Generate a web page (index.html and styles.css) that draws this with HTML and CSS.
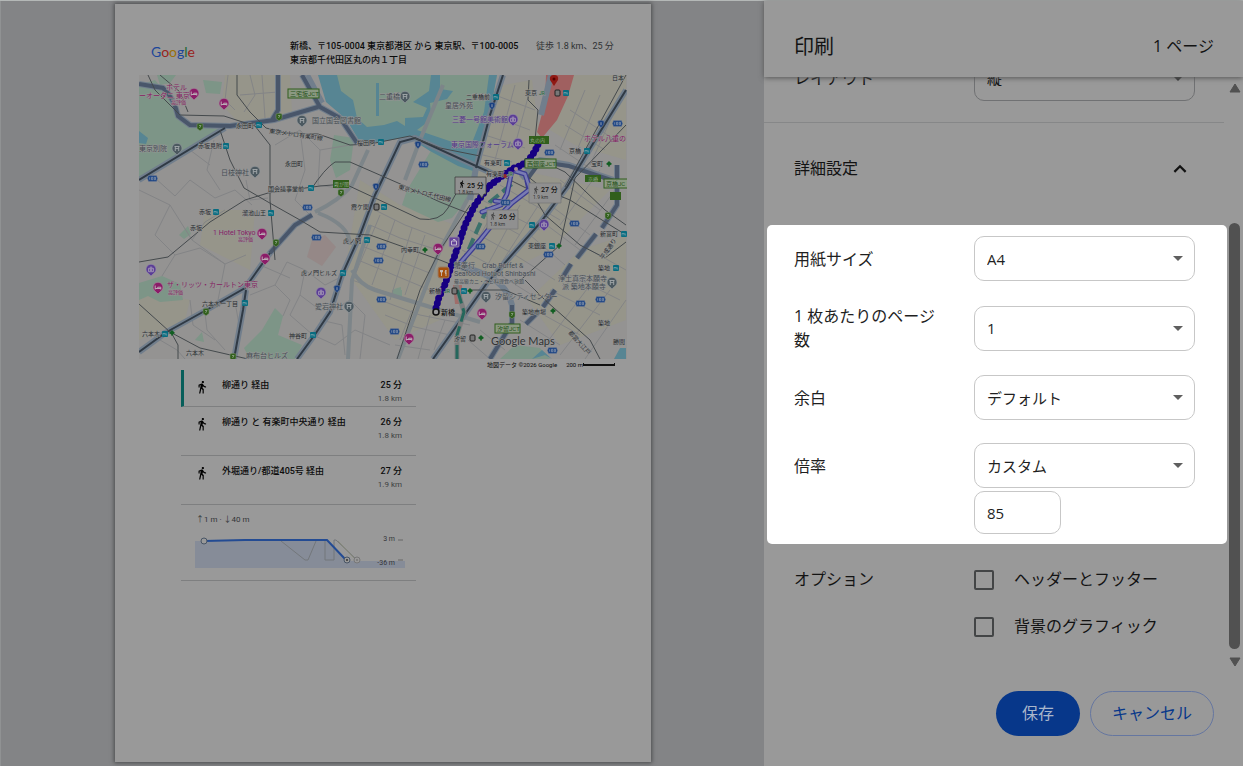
FILE: index.html
```html
<!DOCTYPE html>
<html lang="ja">
<head>
<meta charset="utf-8">
<meta name="viewport" content="width=device-width, initial-scale=1">
<title>印刷</title>
<link rel="stylesheet" href="styles.css">
</head>
<body>
<div class="dialog">
  <main class="preview">
    <article class="paper">
      <header class="paper-head">
        <div class="logo" aria-label="Google"><span class="g-blue">G</span><span class="g-red">o</span><span class="g-yellow">o</span><span class="g-blue">g</span><span class="g-green">l</span><span class="g-red">e</span></div>
        <h2 class="trip">新橋、〒105-0004 東京都港区 から 東京駅、〒100-0005<br>東京都千代田区丸の内１丁目</h2>
        <p class="trip-sum">徒歩 1.8 km、25 分</p>
      </header>

      <svg class="map" viewBox="139 75 488 284" role="img" aria-label="新橋から東京駅までの地図">
        <defs>
          <symbol id="metro" viewBox="0 0 6 6"><rect width="6" height="6" rx="1" fill="#086c80"/><path d="M1 4.500V2l1 1 1-1v2.500M4 2v2h1.200" fill="none" stroke="#87a9b0" stroke-width=".6"/></symbol>
          <symbol id="hotel" viewBox="0 0 12 12"><path d="M6 12L3.500 9.600A5 5 0 1 1 8.500 9.600Z" fill="#8b1c68" stroke="#a1889a" stroke-width=".7"/><path d="M3.200 3.500V7.500M3.200 6.500H8.800M8.800 7.500V5.200H5.700V6.500" fill="none" stroke="#bbabb5"/></symbol>
          <symbol id="poi" viewBox="0 0 12 12"><path d="M6 12L3.500 9.600A5 5 0 1 1 8.500 9.600Z" fill="#4c5960" stroke="#90979b" stroke-width=".7"/><path d="M3.500 3.500h5M4.300 3.500v4.500M7.700 3.500v4.500M4.300 5.600h3.400" fill="none" stroke="#a4a9ac" stroke-width=".9"/></symbol>
          <symbol id="art" viewBox="0 0 12 12"><path d="M6 12L3.500 9.600A5 5 0 1 1 8.500 9.600Z" fill="#5a3c96" stroke="#948ba6" stroke-width=".7"/><path d="M3.600 4.300h4.800v3.400H3.600zM4.800 3.200h2.400M5.200 5.200h1.600v1.400H5.200z" fill="none" stroke="#aea6ba" stroke-width=".8"/></symbol>
          <symbol id="shield" viewBox="0 0 8 8"><path d="M1 1Q4-.5 7 1Q8 5 4 7.800Q0 5 1 1Z" fill="#183f80" stroke="#7e8795" stroke-width=".5"/><path d="M4 2.200v3" stroke="#a3aab5" stroke-width=".9"/></symbol>
          <symbol id="pref" viewBox="0 0 11 7"><path d="M1.500.5h8L10.600 3.500 9.500 6.500h-8L.4 3.500Z" fill="#204785" stroke="#7e8795" stroke-width=".4"/><path d="M2.700 2.300v2.400M4.500 2.300h1.300v2.400H4.500zM7.300 2.300h1.200v2.400H7.300z" fill="none" stroke="#9ca6b5" stroke-width=".6"/></symbol>
          <symbol id="exit" viewBox="0 0 8 8"><path d="M1 1Q4-.5 7 1V5.500L4 7.800 1 5.500Z" fill="#315f1c" stroke="#80907a" stroke-width=".5"/><path d="M3 2.500h2L3.500 5" fill="none" stroke="#91a48a" stroke-width=".8"/></symbol>
          <symbol id="tree" viewBox="0 0 6 6"><path d="M3 0L6 3 3 5 0 3Z" fill="#125e22"/><path d="M3 3v3" stroke="#125e22"/></symbol>
          <symbol id="walk" viewBox="0 0 24 24"><path d="M13.500 5.500c1.100 0 2-.9 2-2s-.9-2-2-2-2 .9-2 2 .9 2 2 2zM9.800 8.900L7 23h2.100l1.800-8 2.100 2v6h2v-7.500l-2.100-2 .6-3C14.800 12 16.800 13 19 13v-2c-1.900 0-3.500-1-4.300-2.400l-1-1.600c-.4-.6-1-1-1.700-1-.3 0-.5.1-.8.1L6 8.300V13h2V9.600l1.800-.7"/></symbol>
        </defs>
        <rect x="139" y="75" width="488" height="284" fill="#949392"/>

        <g fill="#96958a">
          <path d="M225 75L290 75 292 112 240 124 222 105ZM488 88L532 80 541 145 505 175 475 180 482 130ZM565 75L626 75V160L575 145 550 130ZM470 205L520 170 610 190 550 250 480 285 455 280ZM360 180L400 205 455 225 440 320 395 340 345 270ZM205 210L255 210 250 270 200 245ZM139 290L190 300 185 320 139 340ZM528 300L580 250 626 235V320L560 345Z"/>
        </g>
        <g fill="#7d9587">
          <path d="M139 85L155 80 172 100 180 121 222 130 139 178ZM157 75H176L170 83 160 85ZM203 80L222 82 220 94 206 93Z"/>
          <path d="M332 75H497L476 165 420 140 395 134 366 138 340 112Z"/>
          <path d="M432 149L476 170 480 184 452 218 438 222 402 205 407 190Z"/>
          <path d="M334 135L354 138 350 170 336 178 330 160ZM244 348L262 330 275 308 283 316 278 335 302 345 295 359H250ZM139 283L162 276 180 284 183 300 160 302 148 296 139 300ZM179 235L188 226 191 234 184 239ZM195 340L202 332 204 342ZM394 289L401 287V297L391 295Z"/>
          <path d="M500 359L515 345 540 348 550 359ZM392 290H402V297H392Z"/>
        </g>
        <g fill="#578593">
          <path d="M318 75H337L341 91 353 100 357 118 367 127 384 125 397 121 405 126 405 118 423 117 427 108 413 102 429 91 431 75H440V89L453 91 447 99 430 103 431 115 425 124 417 130 470 148 484 112 489 75H497L490 113 476 172 458 166 430 151 408 137 380 142 360 142 346 119 326 102Z"/>
          <path d="M376 83H379V116H376ZM139 131L148 138 146 144 139 143ZM620 348H626V359H614Z"/>
          <path d="M532 359L542 350 552 359 545 355Z"/>
        </g>
        <path d="M546 75H574L568 96 557 120 542 138 537 132 545 103Z" fill="#a06060"/>
        <path d="M312 240L325 235 336 247 322 266 307 257Z" fill="#958887"/>
        <path d="M453 285H462V304H455Z" fill="#a06d6a"/>

        <g fill="none" stroke="#838486" stroke-width="1">
          <path d="M139 190L170 205 192 240 225 264 218 300M155 178L175 196 190 180 215 198 235 190 252 205M170 205L155 235 175 255 162 276M192 240L205 222 225 210M175 255L200 248 225 264 246 255M190 300L193 325 215 340M218 300L235 302 240 330M204 305L207 330 225 350M165 333L190 318M250 295L275 285 290 300 283 316M275 285L287 262 305 270 300 295 320 310M260 265L290 278M305 270L325 285 345 275M300 295L290 315 313 335M313 335L335 345 355 330 390 345M330 312L350 300 365 315 360 359M350 300L352 280M320 320L342 325 345 355M246 180L250 200 268 198M160 340L177 350 185 359M214 140L207 170 220 190M190 150L210 165"/>
          <path d="M275 145L300 130 320 150 350 145M300 130L305 170 295 200 310 215M320 150L318 185 350 190M250 75L255 95 244 112M228 75L225 100 235 110M262 75L265 118M240 95L278 92M375 210L405 225 445 240M370 225L400 238 438 250M362 246L432 274M358 260L430 290M352 280L425 306M380 215L355 275M395 220L372 285M412 228L390 300M425 235L405 295M380 300L420 315 470 325M385 315L415 327 450 335M395 345L430 350M412 310L400 340M430 315L418 359M445 320L434 350"/>
          <path d="M495 95L535 110M490 115L530 130M485 135L525 148M483 155L512 162M515 85L495 160M530 90L515 145M475 210L520 235M482 200L540 230M500 185L560 220M470 230L510 252M462 250L500 270M500 200L472 250M520 205L485 270M545 195L500 265M560 180L600 210M550 205L590 235M540 220L580 250M530 235L565 265M515 255L555 280M500 275L540 300M580 160L548 210M600 170L560 225M615 190L575 245M570 110L615 140M565 125L605 150M555 145L600 175M585 90L560 150M600 95L575 155M615 110L590 165M520 320L560 345M535 310L580 335M550 290L600 315M570 275L620 300M590 250L626 270M545 345L590 285M560 355L610 290M585 359L626 300M480 330L505 350M468 340L490 359"/>
        </g>
        <g fill="none" stroke="#7d8589" stroke-width="4">
          <path d="M315 212Q340 200 352 185L368 150M370 225L352 280 348 359M318 213Q350 225 350 245M352 270Q360 285 375 290L440 310 480 322M443 85L420 140 405 180M478 180L440 250 398 359"/>
        </g>

        <g fill="none" stroke="#717e8c" stroke-width="6" stroke-linejoin="round">
          <path d="M139 84L163 88Q174 98 178 116L190 125 230 126 274 120 318 107M302 75L320 107 340 118 357 143M307 75L322 103M278 75V110L272 120M225 128L139 180M139 352L165 333 210 308 245 288 270 253 295 225 312 215M234 359L243 310 246 290M297 359L316 333 330 312 342 275 360 235 375 195 400 142 415 138 500 177M433 359L463 317 487 283 540 223 567 187 600 132 626 90"/>
          <path d="M503 75L490 115 476 168 470 200M460 267Q505 275 512 305V323L490 359"/>
          <path d="M521 178L540 160 569 165 626 184M617 165V205L602 228M596 234L577 258M571 264L561 280M555 290L543 307M538 312L526 324M551 75L541 115"/>
        </g>
        <g fill="none" stroke="#49566a" stroke-width="4">
          <path d="M139 84L163 88Q174 98 178 116L190 125 230 126 274 120 318 107M302 75L320 107 340 118 357 143M278 75V110L272 120M270 253L295 225 312 215M512 305V323L490 359M526 181L540 162 569 166 626 185M617 165V205L602 228M596 234L577 258M571 264L561 280M555 290L543 307M538 312L526 324"/>
        </g>
        <g fill="none" stroke="#303a45" stroke-width="2">
          <path d="M225 128L139 180M139 352L165 333 210 308 245 288 270 253M234 359L243 310 246 290M297 359L316 333 330 312 342 275 360 235 375 195 400 142 415 138 500 177M433 359L463 317 487 283 540 223 567 187 600 132 626 90M503 75L490 115 476 168"/>
        </g>
        <g fill="none" stroke="#454a4d" stroke-width="1">
          <path d="M148 75L155 90 180 115 224 116 255 126 270 145V200L275 260M160 75L180 92 188 112M237 75V95L250 112 266 128 285 133 318 134 350 145 370 144 410 136 440 148 480 156M220 130L230 160 244 188 268 202 300 220 320 232 370 235 440 260 470 272M139 262L168 257 210 222 245 200 268 193 320 186M310 191Q325 168 335 162H350L405 186 440 202 470 214M320 186L345 184 375 198 420 219Q440 222 448 208L458 190M139 304L170 332 200 348 248 359M172 334L178 345V359M397 359L420 290 440 250 470 205M529 80L528 100 538 110 535 140M500 175L530 190 545 215 580 245 605 258 626 242M540 160L565 172 605 210 626 225M513 165L545 190 570 200 626 235M525 280L545 300 590 340 600 359M470 290L505 290 540 305M626 75L565 187M626 125L575 178 560 245 515 285"/>
        </g>
        <path d="M457 359V335L464 312 456 285" fill="none" stroke="#7e7e7e" stroke-width="5"/>
        <path d="M457 359V335L464 312 456 285" fill="none" stroke="#25675c" stroke-width="3" stroke-dasharray="14 5"/>
        <path d="M462 265L475 235 490 202 512 184" fill="none" stroke="#3c716b" stroke-width="4" stroke-dasharray="12 5"/>

        <g fill="none" stroke-linejoin="round" stroke-linecap="round">
          <path d="M460 263L480 240 500 215 512 203 530 189 525 174 512 170 507 194 501 205 482 212M512 203L495 201M460 263L474 247M529 190L527 181" stroke="#3c3c91" stroke-width="5"/>
          <path d="M460 263L480 240 500 215 512 203 530 189 525 174 512 170 507 194 501 205 482 212M512 203L495 201M460 263L474 247" stroke="#797bb3" stroke-width="2.500"/>
          <path d="M436 308L439 297 444 287 452 264 458 246 465 225 475 205 488 187 502 176 514 168 520 166 528 161 535 151 539 142" stroke="#140678" stroke-width="5"/>
          <path d="M436 308L439 297 444 287 452 264 458 246 465 225 475 205 488 187 502 176 514 168 520 166 528 161 535 151 539 142" stroke="#170082" stroke-width="7" stroke-dasharray="0 5"/>
        </g>
        <circle cx="505" cy="176" r="2" fill="#962929"/><circle cx="516" cy="169" r="2" fill="#a28c91"/>
        <circle cx="436" cy="312" r="3" fill="#999" stroke="#111" stroke-width="1.500"/>
        <path d="M554 86L550 80Q549 75 554 75T558 80Z" fill="#901914"/><circle cx="554" cy="79" r="1.500" fill="#500"/>

        <g>
          <use href="#metro" x="256" y="122" width="6" height="6"/><use href="#metro" x="223" y="143" width="6" height="6"/><use href="#metro" x="308" y="185" width="6" height="6"/><use href="#metro" x="378" y="139" width="6" height="6"/><use href="#metro" x="213" y="209" width="6" height="6"/><use href="#metro" x="268" y="210" width="6" height="6"/><use href="#metro" x="381" y="204" width="6" height="6"/><use href="#metro" x="364" y="237" width="6" height="6"/><use href="#metro" x="340" y="270" width="6" height="6"/><use href="#metro" x="242" y="300" width="6" height="6"/><use href="#metro" x="162" y="331" width="6" height="6"/><use href="#metro" x="310" y="332" width="6" height="6"/><use href="#metro" x="493" y="94" width="6" height="6"/><use href="#metro" x="563" y="90" width="6" height="6"/><use href="#metro" x="504" y="160" width="6" height="6"/><use href="#metro" x="584" y="148" width="6" height="6"/><use href="#metro" x="529" y="222" width="6" height="6"/><use href="#metro" x="549" y="243" width="6" height="6"/><use href="#metro" x="613" y="265" width="6" height="6"/><use href="#metro" x="621" y="231" width="6" height="6"/><use href="#metro" x="461" y="288" width="6" height="6"/>
          <use href="#hotel" x="188" y="88" width="12" height="12"/><use href="#hotel" x="218" y="98" width="12" height="12"/><use href="#hotel" x="256" y="228" width="12" height="12"/><use href="#hotel" x="259" y="253" width="12" height="12"/><use href="#hotel" x="152" y="282" width="12" height="12"/><use href="#hotel" x="432" y="243" width="12" height="12"/><use href="#hotel" x="476" y="308" width="12" height="12"/><use href="#hotel" x="403" y="333" width="12" height="12"/>
          <use href="#poi" x="171" y="143" width="12" height="12"/><use href="#poi" x="249" y="166" width="12" height="12"/><use href="#poi" x="296" y="115" width="12" height="12"/><use href="#poi" x="399" y="91" width="12" height="12"/><use href="#poi" x="343" y="301" width="12" height="12"/><use href="#poi" x="480" y="291" width="12" height="12"/><use href="#poi" x="606" y="277" width="12" height="12"/>
          <use href="#art" x="145" y="264" width="12" height="12"/><use href="#art" x="315" y="287" width="12" height="12"/><use href="#art" x="507" y="114" width="12" height="12"/><use href="#art" x="512" y="138" width="12" height="12"/><use href="#art" x="538" y="219" width="12" height="12"/>
          <use href="#shield" x="372" y="183" width="8" height="8"/><use href="#shield" x="414" y="141" width="8" height="8"/><use href="#shield" x="333" y="285" width="8" height="8"/><use href="#shield" x="488" y="102" width="8" height="8"/><use href="#shield" x="597" y="120" width="8" height="8"/>
          <use href="#pref" x="147" y="175" width="11" height="7"/><use href="#pref" x="302" y="204" width="11" height="7"/><use href="#pref" x="311" y="234" width="11" height="7"/><use href="#pref" x="376" y="243" width="11" height="7"/><use href="#pref" x="373" y="257" width="11" height="7"/><use href="#pref" x="376" y="296" width="11" height="7"/><use href="#pref" x="389" y="328" width="11" height="7"/><use href="#pref" x="418" y="161" width="11" height="7"/><use href="#pref" x="544" y="149" width="11" height="7"/><use href="#pref" x="612" y="120" width="11" height="7"/><use href="#pref" x="500" y="199" width="11" height="7"/><use href="#pref" x="475" y="243" width="11" height="7"/><use href="#pref" x="569" y="220" width="11" height="7"/><use href="#pref" x="543" y="251" width="11" height="7"/><use href="#pref" x="595" y="296" width="11" height="7"/><use href="#pref" x="575" y="300" width="11" height="7"/><use href="#pref" x="547" y="347" width="11" height="7"/>
          <use href="#exit" x="196" y="123" width="8" height="8"/><use href="#exit" x="275" y="113" width="8" height="8"/><use href="#exit" x="272" y="239" width="8" height="8"/><use href="#exit" x="202" y="308" width="8" height="8"/><use href="#exit" x="337" y="189" width="8" height="8"/><use href="#exit" x="229" y="353" width="8" height="8"/><use href="#exit" x="508" y="311" width="8" height="8"/><use href="#exit" x="604" y="212" width="8" height="8"/>
          <use href="#tree" x="169" y="330" width="6" height="6"/><use href="#tree" x="422" y="247" width="6" height="6"/><use href="#tree" x="467" y="288" width="6" height="6"/><use href="#tree" x="556" y="243" width="6" height="6"/><use href="#tree" x="550" y="308" width="6" height="6"/><use href="#tree" x="478" y="335" width="6" height="6"/><use href="#tree" x="606" y="161" width="6" height="6"/>
        </g>
        <g fill="#777" stroke="#222" stroke-width="1"><rect x="555" y="90" width="5" height="6" rx="1"/><rect x="374" y="204" width="5" height="6" rx="1"/><rect x="452" y="288" width="5" height="6" rx="1"/><rect x="470" y="335" width="5" height="6" rx="1"/></g>
        <rect x="438" y="267" width="11" height="11" rx="2" fill="#a6500d" stroke="#987b66"/><path d="M441.500 270v6M440.500 270v2h2v-2M446 276v-6q-2 2 0 4" fill="none" stroke="#ccc" stroke-width=".8"/>
        <rect x="449" y="237" width="10" height="10" rx="1" fill="#65449a" stroke="#92849f"/><path d="M451.500 241h5v4h-5zM453 239.500h2v1.500" fill="none" stroke="#c3bace"/>
        <g fill="#315f1c"><rect x="333" y="180" width="16" height="8"/><rect x="529" y="136" width="20" height="8"/><rect x="585" y="175" width="16" height="7"/><rect x="610" y="192" width="11" height="8"/></g>
        <g fill="#8b9982" stroke="#315f1c"><rect x="288" y="89" width="31" height="9"/><rect x="525" y="159" width="31" height="9"/><rect x="604" y="179" width="30" height="9"/><rect x="495" y="324" width="25" height="9"/></g>

        <g class="map-label exit-label"><text x="290" y="96">三宅坂JCT</text><text x="527" y="166">西銀座JCT</text><text x="606" y="186">京橋JC</text><text x="497" y="331">汐留JCT</text></g>
        <g class="map-label sign"><text x="334" y="186">霞が関</text><text x="530" y="142">丸の内</text><text x="588" y="181">京橋</text></g>
        <g class="map-label">
          <text x="236" y="128">永田町</text><text x="198" y="148">赤坂見附</text><text x="285" y="166">永田町</text><text x="268" y="191">国会議事堂前</text><text x="357" y="145">桜田門</text><text x="199" y="214">赤坂</text><text x="190" y="230">赤坂</text><text x="242" y="215">溜池山王</text><text x="351" y="209">霞ケ関</text><text x="343" y="243">虎ノ門</text><text x="301" y="275">虎ノ門ヒルズ</text><text x="202" y="306">六本木一丁目</text><text x="142" y="336">六本木</text><text x="186" y="355">六本木</text><text x="289" y="338">神谷町</text><text x="466" y="99">二重橋前</text><text x="525" y="95">東京</text><text x="484" y="165">有楽町</text><text x="486" y="176">有楽町</text><text x="569" y="153">京橋</text><text x="591" y="166">宝町</text><text x="612" y="80">日本</text><text x="401" y="252">内幸町</text><text x="429" y="293">新橋</text><text x="528" y="248">東銀座</text><text x="600" y="236">新富町</text><text x="598" y="270">築地</text><text x="522" y="314">築地市場</text><text x="598" y="325">築地</text><text x="454" y="341">汐留</text><text x="613" y="344">勝閧</text>
          <text x="398" y="189" transform="rotate(14 398 189)">東京メトロ千代田線</text><text x="269" y="133" transform="rotate(8 269 133)">東京メトロ有楽町線</text><text x="603" y="260" transform="rotate(-55 603 260)">平成通り</text><text x="568" y="333" transform="rotate(48 568 333)">都営大江戸</text>
        </g>
        <g class="map-label jr"><text x="539" y="95">JR</text><text x="507" y="176">JR</text><text x="444" y="293">JR</text></g>
        <text x="441" y="315" class="map-label start">新橋</text>
        <g class="map-label gray"><text x="139" y="151">東京別院</text><text x="221" y="175">日枝神社</text><text x="312" y="123">国立国会図書館</text><text x="379" y="99">二重橋</text><text x="315" y="309">愛宕神社</text><text x="445" y="108">皇居外苑</text><text x="495" y="299">汐留シティセンター</text><text x="558" y="281">浄土真宗本願寺</text><text x="562" y="289">派 築地本願寺</text><text x="246" y="358">麻布台ヒルズ</text><text x="454" y="268">蟹奉行　Crab Buffet &amp;</text><text x="454" y="276">Seafood Hotpot Shinbashi</text></g>
        <g class="map-label gray note"><text x="454" y="283">最高級カニ・エビ料理食べ放題</text></g>
        <g class="map-label pink"><text x="166" y="90">ホテル</text><text x="139" y="98">ーオータニ 東京</text><text x="213" y="235">1 Hotel Tokyo</text><text x="167" y="287">ザ・リッツ・カールトン東京</text><text x="584" y="141">ホテル八重の</text></g>
        <g class="map-label pink note"><text x="171" y="104">高評価</text><text x="238" y="241">高評価</text><text x="168" y="294">高評価</text></g>
        <g class="map-label purple"><text x="452" y="122">三菱一号館美術館</text><text x="451" y="147">東京国際フォーラム</text></g>

        <g fill="#909090" stroke="#333" stroke-width=".7"><path d="M455 177H486V194H484L482 198 479 194H455Z"/><path d="M529 183H561V203H529Z" stroke="#777"/><path d="M487 210H518V229H487Z" stroke="#777"/></g>
        <use href="#walk" x="458" y="180" width="8" height="8"/><use href="#walk" x="532" y="186" width="8" height="8" fill="#444"/><use href="#walk" x="489" y="212" width="8" height="8" fill="#444"/>
        <g class="map-time"><text x="467" y="188">25 分</text><text x="541" y="192">27 分</text><text x="499" y="219">26 分</text></g>
        <g class="map-dist"><text x="458" y="194">1.8 km</text><text x="533" y="199">1.9 km</text><text x="490" y="226">1.8 km</text></g>
        <text x="491" y="345" class="map-brand">Google Maps</text>
      </svg>
      <p class="map-foot"><span>地図データ ©2026 Google</span><span class="scale">200 m<i class="scale-bar"></i></span></p>

      <ul class="routes">
        <li class="route route-active"><svg class="walk" viewBox="0 0 24 24"><use href="#walk"/></svg><b class="via">柳通り 経由</b><span class="cost"><b>25 分</b><small>1.8 km</small></span></li>
        <li class="route route-tall"><svg class="walk" viewBox="0 0 24 24"><use href="#walk"/></svg><b class="via">柳通り と 有楽町中央通り 経由</b><span class="cost"><b>26 分</b><small>1.8 km</small></span></li>
        <li class="route route-tall"><svg class="walk" viewBox="0 0 24 24"><use href="#walk"/></svg><b class="via">外堀通り/都道405号 経由</b><span class="cost"><b>27 分</b><small>1.9 km</small></span></li>
        <li class="elevation">
          <p class="climb">↑1 m · ↓40 m</p>
          <svg class="profile" viewBox="0 0 210 36" role="img" aria-label="標高">
            <path d="M0 9H132L152 29H210V36H0Z" fill="#868c98"/>
            <path d="M86 9L110 28H113L121 9M130 8V28H139V8L141 8 162 28" fill="none" stroke="#73777b"/>
            <path d="M143 9L161 28" stroke="#858878" stroke-width="1"/>
            <path d="M9 9L50 8H132L151 28" fill="none" stroke="#234b93" stroke-width="2"/>
            <g fill="#999" stroke="#485565"><circle cx="9" cy="9" r="3"/><circle cx="152" cy="28" r="3"/><circle cx="162" cy="28" r="3" stroke="#777"/></g>
            <circle cx="152" cy="28" r="1" fill="#333"/><circle cx="162" cy="28" r="1" fill="#777"/>
            <path d="M203 8H208M203 28H208" stroke="#666"/>
            <g class="axis"><text x="200" y="9">3 m</text><text x="200" y="33">-36 m</text></g>
          </svg>
        </li>
      </ul>
    </article>
  </main>

  <aside class="sidebar">
    <header class="side-head"><h1>印刷</h1><span>1 ページ</span></header>
    <div class="side-body">
      <form class="settings" id="settings">
        <div class="row">
          <label for="layout">レイアウト</label>
          <div class="pick"><select id="layout"><option>縦</option></select><svg viewBox="0 0 10 5"><path d="M0 0H10L5 5Z"/></svg></div>
        </div>
        <button type="button" class="more" aria-expanded="true">詳細設定<svg viewBox="0 0 12 8"><path d="M1 7L6 2 11 7"/></svg></button>
        <div class="card">
          <div class="row">
            <label for="size">用紙サイズ</label>
            <div class="pick"><select id="size"><option>A4</option></select><svg viewBox="0 0 10 5"><path d="M0 0H10L5 5Z"/></svg></div>
          </div>
          <div class="row">
            <label for="per">1 枚あたりのページ数</label>
            <div class="pick"><select id="per"><option>1</option></select><svg viewBox="0 0 10 5"><path d="M0 0H10L5 5Z"/></svg></div>
          </div>
          <div class="row">
            <label for="margin">余白</label>
            <div class="pick"><select id="margin"><option>デフォルト</option></select><svg viewBox="0 0 10 5"><path d="M0 0H10L5 5Z"/></svg></div>
          </div>
          <div class="row">
            <label for="zoom">倍率</label>
            <div class="pick"><select id="zoom"><option>カスタム</option></select><svg viewBox="0 0 10 5"><path d="M0 0H10L5 5Z"/></svg></div>
            <input class="percent" type="text" value="85" aria-label="倍率 (%)">
          </div>
        </div>
        <div class="row options">
          <span>オプション</span>
          <div class="checks">
            <label><input type="checkbox">ヘッダーとフッター</label>
            <label><input type="checkbox">背景のグラフィック</label>
          </div>
        </div>
      </form>
      <div class="scrollbar" aria-hidden="true">
        <svg viewBox="0 0 12 10"><path d="M6 1L11 9H1Z"/></svg>
        <div class="track"><div class="thumb"></div></div>
        <svg viewBox="0 0 12 10"><path d="M6 9L11 1H1Z"/></svg>
      </div>
    </div>
    <footer class="actions">
      <button type="submit" form="settings" class="save">保存</button>
      <button type="button" class="cancel">キャンセル</button>
    </footer>
  </aside>
</div>
</body>
</html>
```
FILE: styles.css
```css
* { box-sizing: border-box; }
body { margin: 0; font: 16px/25px "Open Sans", "Noto Sans CJK JP", sans-serif; color: #131313; background: #838486; }
h1, h2, p, ul { margin: 0; padding: 0; font-weight: 400; }
button, select, input { font: inherit; color: inherit; margin: 0; }
.dialog { display: flex; min-height: 100vh; border-top: 1px solid #b4b8b7; }

/* preview */
.preview { flex: 1; min-width: 0; padding: 3px 113px 0 114px; border-left: 1px solid #909293; }
.paper { aspect-ratio: 210 / 297; padding: 0 24px; background: #999; box-shadow: 0 0 4px 1px #4b4c4d; font-family: Roboto, "Noto Sans CJK JP", sans-serif; font-size: 9px; line-height: 14px; color: #0c0c0c; }
.paper-head { display: flex; align-items: flex-start; height: 71px; padding: 35px 0 0 12px; }
.logo { flex: 0 0 139px; font: 14px/26px Lato, sans-serif; }
.g-blue { color: #1d4799; }
.g-red { color: #98241d; }
.g-yellow { color: #9c7007; }
.g-green { color: #1d6731; }
.trip { flex: 0 0 246px; font-size: 9px; font-weight: 500; }
.trip-sum { white-space: nowrap; color: #303234; }
.map { display: block; width: 100%; }
.map-label { font-size: 6px; fill: #282c2f; stroke: #959595; stroke-width: 1px; paint-order: stroke; }
.exit-label { font-size: 6px; fill: #26521a; stroke: none; }
.sign { font-size: 5px; fill: #8fa486; stroke: none; }
.jr { font-size: 5px; fill: #20693c; }
.gray { font-size: 7px; fill: #464e54; }
.pink { font-size: 7px; fill: #851d61; }
.purple { font-size: 7px; fill: #513889; }
.note { font-size: 5px; }
.start { font-size: 7px; font-weight: 500; fill: #111; }
.map-time { font-size: 7px; font-weight: 500; fill: #111; }
.map-dist { font-size: 5px; fill: #333; }
.map-brand { font-family: Lato, sans-serif; font-size: 11px; fill: #303335; stroke: #999; stroke-width: 1px; paint-order: stroke; }
.map-foot { display: flex; justify-content: flex-end; gap: 9px; padding-right: 12px; font-size: 6px; line-height: 11px; }
.scale { display: flex; align-items: center; }
.scale-bar { width: 32px; height: 3px; border: solid #111; border-width: 0 1px 2px; }

.routes { width: 235px; margin-left: 42px; list-style: none; }
.route { display: flex; height: 37px; padding: 8px 14px 0 16px; border-bottom: 1px solid #7e7f80; }
.route-active { padding-left: 13px; border-left: 3px solid #075e5a; }
.route-tall { height: 49px; }
.walk { width: 14px; height: 14px; margin: 2px 13px 0 -2px; }
.via { flex: 1; font-weight: 500; }
.cost { display: flex; flex-direction: column; text-align: right; }
.cost b { font-weight: 500; }
.cost small { font-size: 8px; color: #3d3f41; }
.elevation { height: 76px; padding: 8px 11px 0 14px; border-bottom: 1px solid #7e7f80; }
.climb { padding-left: 1px; font-size: 8px; color: #333538; }
.profile { display: block; width: 100%; margin-top: 5px; overflow: visible; }
.axis { font-size: 7px; fill: #333538; text-anchor: end; }

/* sidebar */
.sidebar { display: flex; flex-direction: column; flex: 0 0 479px; height: calc(100vh - 1px); background: #999; }
.side-head { position: relative; z-index: 1; display: flex; align-items: center; justify-content: space-between; flex: 0 0 76px; padding: 14px 29px 0 30px; background: #999; box-shadow: 0 1px 5px #555; }
.side-head h1 { font-size: 20px; }
.side-body { display: flex; flex: 1; min-height: 0; overflow: hidden; }
.settings { flex: 1; margin-top: -21px; }
.row { display: grid; grid-template-columns: 150px 1fr; column-gap: 30px; row-gap: 3px; align-items: center; padding: 0 29px 0 30px; }
.pick { display: grid; align-items: center; font-size: 15px; }
.pick > * { grid-area: 1 / 1; }
.pick select { width: 100%; height: 45px; padding: 0 12px; appearance: none; background: transparent; border: 1px solid #707173; border-radius: 10px; }
.pick svg { justify-self: end; width: 10px; height: 5px; margin-right: 12px; fill: #363738; pointer-events: none; }
.more { display: flex; align-items: center; justify-content: space-between; width: 100%; height: 91px; margin: 21px 0 12px; padding: 0 37px 0 30px; background: none; border: 0; border-top: 1px solid #868788; text-align: left; }
.more svg { width: 14px; height: 9px; fill: none; stroke: #131313; stroke-width: 2; }
.card { position: relative; display: flex; flex-direction: column; gap: 23px; margin: 0 -3px 0 3px; padding: 11px 3px 10px 0; background: #fff; border-radius: 5px; color: #1f1f1f; line-height: 24px; }
.card .row { padding: 0 29px 0 27px; }
.card select, .percent { border-color: #c7c7c7; }
.card .pick svg { fill: #5f5f5f; }
.percent { grid-column: 2; width: 87px; height: 43px; padding: 0 12px; border: 1px solid #c7c7c7; border-radius: 10px; background: #fff; font-size: 15px; }
.options { align-items: start; padding-top: 23px; }
.checks { display: grid; gap: 22px; }
.checks label { display: flex; align-items: center; gap: 20px; }
.checks input { width: 20px; height: 20px; appearance: none; border: 2px solid #434546; border-radius: 2px; }
.scrollbar { display: flex; flex-direction: column; align-items: center; flex: 0 0 19px; padding: 6px 0 5px 2px; }
.scrollbar svg { width: 12px; height: 10px; fill: #515151; stroke: #515151; stroke-linejoin: round; }
.track { display: flex; flex: 1; width: 11px; padding: 130px 0 8px; }
.thumb { flex: 1; background: #515151; border-radius: 6px; }
.actions { display: flex; justify-content: flex-end; gap: 10px; padding: 19px 29px 30px; }
.actions button { height: 45px; border-radius: 23px; }
.save { padding: 0 26px; background: #07378a; border: 0; color: #a9b6cb; }
.cancel { padding: 0 21px; background: none; border: 1px solid #6576a0; color: #07378a; }
```
